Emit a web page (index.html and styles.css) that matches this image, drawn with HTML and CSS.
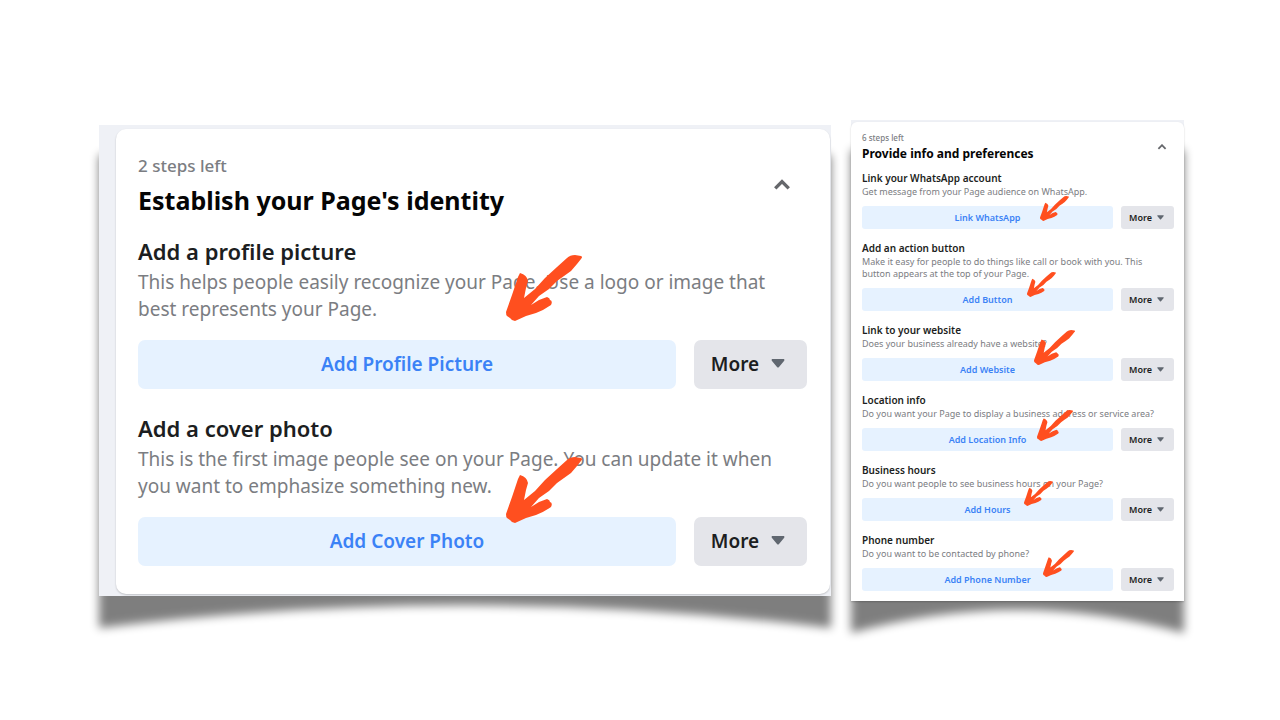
FILE: index.html
```html
<!DOCTYPE html>
<html lang="en">
<head>
<meta charset="utf-8">
<meta name="viewport" content="width=device-width, initial-scale=1">
<title>Page setup steps</title>
<link rel="stylesheet" href="styles.css">
</head>
<body>
<svg class="defs" aria-hidden="true">
  <symbol id="arrow" viewBox="0 0 76 66" preserveAspectRatio="none"><path d="M0 57L6 40L10 28L12 22L14 18Q21 20 22 26L20 33L18 43L29 34L39 23L51 12L61 3Q64 0 69 0L75 1Q77 2 75 4L71 9L65 16L58 21L51 26L43 34L33 41L25 50L33 45L41 42Q44 43 44 45Q47 46 45 50Q38 55 30 58L20 61L9 66Q6 66 4 63L1 61Q0 60 0 57Z"/></symbol>
  <symbol id="up" viewBox="0 0 16 10"><path d="M2 8L8 2L14 8"/></symbol>
  <symbol id="down" viewBox="0 0 14 9"><path d="M1 0H13Q14 1 13 2L8 8Q7 9 6 8L1 2Q0 1 1 0Z"/></symbol>
</svg>
<main class="page">
  <section class="panel panel-large">
    <svg class="shadow" viewBox="0 0 100 100" preserveAspectRatio="none" aria-hidden="true"><path d="M0 6Q50 -1 100 6V100Q50 91 0 100Z"/></svg>
    <div class="backdrop">
      <div class="card">
        <header class="card-head">
          <div><p class="steps">2 steps left</p><h1 class="title">Establish your Page's identity</h1></div>
          <button class="collapse" aria-label="Collapse"><svg><use href="#up"/></svg></button>
        </header>
        <div class="step">
          <h2>Add a profile picture</h2>
          <p>This helps people easily recognize your Page. Use a logo or image that best represents your Page.</p>
          <div class="actions"><button class="primary">Add Profile Picture</button><button class="more">More <svg><use href="#down"/></svg></button><svg class="arrow at-profile" aria-hidden="true"><use href="#arrow"/></svg></div>
        </div>
        <div class="step">
          <h2>Add a cover photo</h2>
          <p>This is the first image people see on your Page. You can update it when you want to emphasize something new.</p>
          <div class="actions"><button class="primary">Add Cover Photo</button><button class="more">More <svg><use href="#down"/></svg></button><svg class="arrow at-cover" aria-hidden="true"><use href="#arrow"/></svg></div>
        </div>
      </div>
    </div>
  </section>
  <section class="panel panel-small">
    <svg class="shadow" viewBox="0 0 100 100" preserveAspectRatio="none" aria-hidden="true"><path d="M0 6Q50 -1 100 6V100Q50 91 0 100Z"/></svg>
    <div class="backdrop">
      <div class="card">
        <header class="card-head">
          <div><p class="steps">6 steps left</p><h1 class="title">Provide info and preferences</h1></div>
          <button class="collapse" aria-label="Collapse"><svg><use href="#up"/></svg></button>
        </header>
        <div class="step">
          <h2>Link your WhatsApp account</h2>
          <p>Get message from your Page audience on WhatsApp.</p>
          <div class="actions"><button class="primary">Link WhatsApp</button><button class="more">More <svg><use href="#down"/></svg></button><svg class="arrow at-whatsapp" aria-hidden="true"><use href="#arrow"/></svg></div>
        </div>
        <div class="step">
          <h2>Add an action button</h2>
          <p>Make it easy for people to do things like call or book with you. This button appears at the top of your Page.</p>
          <div class="actions"><button class="primary">Add Button</button><button class="more">More <svg><use href="#down"/></svg></button><svg class="arrow at-button" aria-hidden="true"><use href="#arrow"/></svg></div>
        </div>
        <div class="step">
          <h2>Link to your website</h2>
          <p>Does your business already have a website?</p>
          <div class="actions"><button class="primary">Add Website</button><button class="more">More <svg><use href="#down"/></svg></button><svg class="arrow at-website" aria-hidden="true"><use href="#arrow"/></svg></div>
        </div>
        <div class="step">
          <h2>Location info</h2>
          <p>Do you want your Page to display a business address or service area?</p>
          <div class="actions"><button class="primary">Add Location Info</button><button class="more">More <svg><use href="#down"/></svg></button><svg class="arrow at-location" aria-hidden="true"><use href="#arrow"/></svg></div>
        </div>
        <div class="step">
          <h2>Business hours</h2>
          <p>Do you want people to see business hours on your Page?</p>
          <div class="actions"><button class="primary">Add Hours</button><button class="more">More <svg><use href="#down"/></svg></button><svg class="arrow at-hours" aria-hidden="true"><use href="#arrow"/></svg></div>
        </div>
        <div class="step">
          <h2>Phone number</h2>
          <p>Do you want to be contacted by phone?</p>
          <div class="actions"><button class="primary">Add Phone Number</button><button class="more">More <svg><use href="#down"/></svg></button><svg class="arrow at-phone" aria-hidden="true"><use href="#arrow"/></svg></div>
        </div>
      </div>
    </div>
  </section>
</main>
</body>
</html>
```

FILE: styles.css
```css
* { box-sizing: border-box; }
body { margin: 0; background: #fff; color: #1c1e21; font-family: "Noto Sans", "Open Sans", sans-serif; }
h1, h2, p { margin: 0; }
button { border: 0; padding: 0; font: inherit; cursor: pointer; }
.defs { position: absolute; width: 0; height: 0; }

.page {
  display: grid;
  grid-template-columns: 732fr 333fr;
  gap: 20px;
  align-items: center;
  min-height: 100vh;
  padding: 0 96px 0 99px;
}
.panel { position: relative; }
.shadow {
  position: absolute;
  left: 0;
  top: 0;
  width: 100%;
  height: calc(100% + 32px);
  overflow: visible;
  fill: #000;
  opacity: 0.5;
  filter: blur(5px);
}
.backdrop { position: relative; background: #eff1f6; }
.card { background: #fff; box-shadow: 0 1px 2px rgba(0, 0, 0, 0.2); }
.card-head { display: flex; justify-content: space-between; align-items: center; }
.steps { color: #7b7d82; font-weight: 500; }
.title { color: #050505; font-weight: 700; }
.collapse { display: flex; background: none; }
.collapse svg { fill: none; stroke: #65676b; stroke-width: 3; }
.step h2 { font-weight: 600; }
.step p { color: #7b7d82; }
.actions { position: relative; display: flex; }
.primary { flex: 1; background: #e6f2ff; color: #3b82f6; font-weight: 600; }
.more { display: flex; align-items: center; justify-content: center; background: #e4e5ea; color: #1c1e21; font-weight: 600; }
.more svg { fill: #606770; }
.arrow { position: absolute; fill: #ff4f1f; }

/* Large panel */
.panel-large { margin-top: 1px; }
.panel-large .backdrop { padding: 4px 1px 2px 17px; }
.panel-large .card { border-radius: 10px; padding: 24px 23px 28px 22px; }
.panel-large .card-head { padding-right: 16px; margin-bottom: 15px; }
.panel-large .steps { font-size: 17px; line-height: 26px; }
.panel-large .title { font-size: 25px; line-height: 42px; }
.panel-large .collapse { padding-bottom: 4px; }
.panel-large .collapse svg { width: 18px; height: 12px; }
.panel-large .step + .step { margin-top: 24px; }
.panel-large h2 { font-size: 22px; line-height: 30px; }
.panel-large .step p { font-size: 19px; line-height: 27px; margin: 3px 0 17px; }
.panel-large .actions { gap: 18px; height: 49px; font-size: 19px; }
.panel-large .primary, .panel-large .more { border-radius: 7px; padding-bottom: 2px; }
.panel-large .more { width: 113px; gap: 12px; padding-right: 5px; }
.panel-large .more svg { width: 14px; height: 9px; }
.panel-large .arrow { width: 76px; height: 66px; left: 55%; }
.at-profile { top: -85px; }
.at-cover { top: -60px; }

/* Small panel */
.panel-small .backdrop { padding-top: 2px; }
.panel-small .card { border-radius: 6px 6px 0 0; padding: 10px 10px 10px 11px; }
.panel-small .card-head { padding-right: 7px; margin-bottom: 8px; }
.panel-small .steps { font-size: 8px; line-height: 12px; }
.panel-small .title { font-size: 12px; line-height: 19px; }
.panel-small .collapse svg { width: 10px; height: 6px; }
.panel-small .step + .step { margin-top: 12px; }
.panel-small h2 { font-size: 10px; line-height: 14px; }
.panel-small .step p { font-size: 9px; line-height: 12px; margin: 1px 0 8px; padding-right: 16px; }
.panel-small .actions { gap: 8px; height: 23px; font-size: 9px; }
.panel-small .primary, .panel-small .more { border-radius: 3px; }
.panel-small .more { width: 53px; gap: 5px; padding-right: 2px; }
.panel-small .more svg { width: 7px; height: 5px; }
.panel-small .arrow { width: 29px; height: 25px; }
.panel-small .at-whatsapp { left: 57%; top: -10px; }
.panel-small .at-button { left: 53%; top: -16px; }
.panel-small .at-website { left: 55%; top: -28px; width: 41px; height: 35px; }
.panel-small .at-location { left: 56%; top: -18px; width: 36px; height: 31px; }
.panel-small .at-hours { left: 52%; top: -17px; }
.panel-small .at-phone { left: 58%; top: -18px; width: 31px; height: 27px; }
```
